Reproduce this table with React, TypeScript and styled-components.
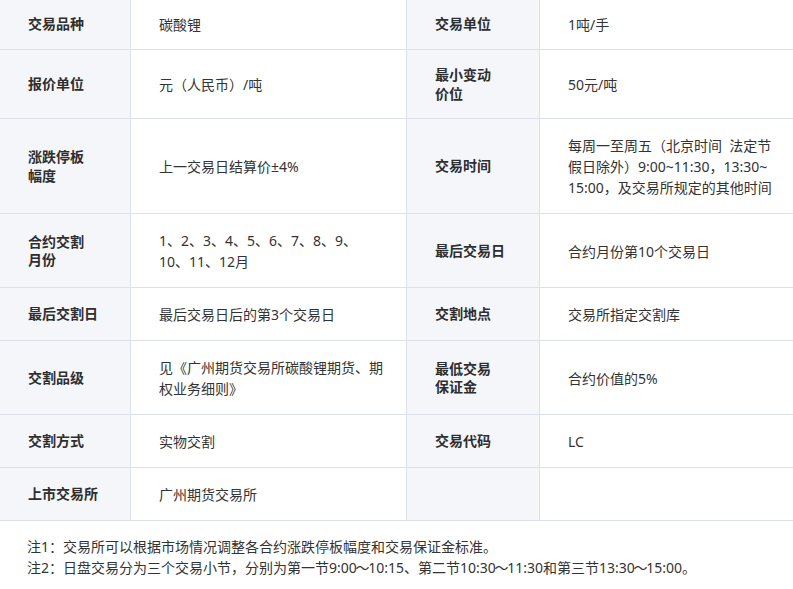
import React from "react";
import styled, { createGlobalStyle } from "styled-components";

const GlobalStyle = createGlobalStyle`
  html, body {
    margin: 0;
    padding: 0;
    background: #fff;
  }

  body {
    font-family: "Noto Sans", "Noto Sans CJK SC", sans-serif;
    color: #333;
  }
`;

const Page = styled.div`
  width: 793px;
`;

const Table = styled.div`
  display: flex;
  flex-direction: column;
`;

const Row = styled.div<{ $compact?: boolean }>`
  display: grid;
  grid-template-columns: 131px 276px 133px 1fr;

  > div {
    padding: ${({ $compact }) => ($compact ? "14px 28px 14px 28px" : "16px 28px 15px 28px")};
  }
`;

const Label = styled.div`
  box-sizing: border-box;
  display: flex;
  align-items: center;
  background: #f4f6fa;
  border-right: 1px solid #dde2ea;
  border-bottom: 1px solid #dde2ea;
  font-size: 14px;
  font-weight: 700;
  line-height: 18.5px;
  color: #2e2e2e;
  white-space: nowrap;
`;

const Value = styled.div<{ $last?: boolean }>`
  box-sizing: border-box;
  display: flex;
  align-items: center;
  background: #fff;
  border-right: ${({ $last }) => ($last ? "none" : "1px solid #dde2ea")};
  border-bottom: 1px solid #dde2ea;
  font-size: 14px;
  line-height: 21px;
  color: #333;
  white-space: nowrap;

  && {
    padding-left: 28px;
    padding-right: 10px;
  }
`;

const Notes = styled.div`
  padding: 15px 27px;
  font-size: 14px;
  line-height: 21px;
  color: #333;
`;

const NoteLine = styled.p`
  margin: 0;
  white-space: nowrap;
`;

const Tilde = styled.span`
  margin: 0 -1.3px;
`;

type Cell = React.ReactNode;

const rows: { a: Cell; b: Cell; c: Cell; d: Cell; compact?: boolean }[] = [
  { a: "交易品种", b: "碳酸锂", c: "交易单位", d: "1吨/手", compact: true },
  {
    a: "报价单位",
    b: "元（人民币）/吨",
    c: (
      <span>
        最小变动
        <br />
        价位
      </span>
    ),
    d: "50元/吨",
  },
  {
    a: (
      <span>
        涨跌停板
        <br />
        幅度
      </span>
    ),
    b: "上一交易日结算价±4%",
    c: "交易时间",
    d: (
      <span>
        每周一至周五（北京时间&nbsp;&nbsp;法定节
        <br />
        假日除外）9:00~11:30，13:30~
        <br />
        15:00，及交易所规定的其他时间
      </span>
    ),
  },
  {
    a: (
      <span>
        合约交割
        <br />
        月份
      </span>
    ),
    b: (
      <span>
        1、2、3、4、5、6、7、8、9、
        <br />
        10、11、12月
      </span>
    ),
    c: "最后交易日",
    d: "合约月份第10个交易日",
  },
  { a: "最后交割日", b: "最后交易日后的第3个交易日", c: "交割地点", d: "交易所指定交割库" },
  {
    a: "交割品级",
    b: (
      <span>
        见《广州期货交易所碳酸锂期货、期
        <br />
        权业务细则》
      </span>
    ),
    c: (
      <span>
        最低交易
        <br />
        保证金
      </span>
    ),
    d: "合约价值的5%",
  },
  { a: "交割方式", b: "实物交割", c: "交易代码", d: "LC" },
  { a: "上市交易所", b: "广州期货交易所", c: "", d: "" },
];

const App: React.FC = () => {
  return (
    <Page>
      <GlobalStyle />
      <Table>
        {rows.map((r, i) => (
          <Row key={i} $compact={r.compact}>
            <Label>{r.a}</Label>
            <Value>{r.b}</Value>
            <Label>{r.c}</Label>
            <Value $last>{r.d}</Value>
          </Row>
        ))}
      </Table>
      <Notes>
        <NoteLine>注1：交易所可以根据市场情况调整各合约涨跌停板幅度和交易保证金标准。</NoteLine>
        <NoteLine>
          注2：日盘交易分为三个交易小节，分别为第一节9:00<Tilde>～</Tilde>10:15、第二节10:30
          <Tilde>～</Tilde>11:30和第三节13:30<Tilde>～</Tilde>15:00。
        </NoteLine>
      </Notes>
    </Page>
  );
};

export default App;
